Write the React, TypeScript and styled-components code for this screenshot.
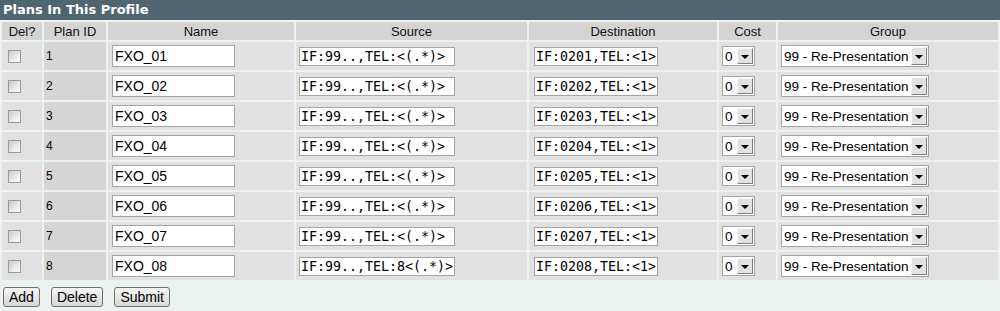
import React from "react";
import styled, { createGlobalStyle } from "styled-components";

const Global = createGlobalStyle`
  html, body { margin: 0; padding: 0; background: #ebf2f0; }
  body { font-family: "Liberation Sans", Arial, sans-serif; font-size: 13px; color: #000; }
`;

const Page = styled.div`
  width: 1000px;
`;

const TitleBar = styled.div`
  height: 20px;
  background: #4f6570;
  color: #fff;
  font-family: "DejaVu Sans", Verdana, sans-serif;
  font-weight: bold;
  font-size: 13px;
  line-height: 20px;
  padding-left: 3px;
`;

const Table = styled.table`
  width: 1000px;
  table-layout: fixed;
  border-spacing: 2px;
  border-collapse: separate;
`;

const HeadCell = styled.th`
  height: 18px;
  padding: 0;
  background: #d4d4d4;
  font-weight: normal;
  font-size: 13px;
  text-align: center;
  color: #111;
`;

const Cell = styled.td<{ $dark?: boolean }>`
  height: 28px;
  padding: 0 0 0 ${(p) => (p.$dark ? "2px" : "3px")};
  background: ${(p) => (p.$dark ? "#d5d5d5" : "#e1e1e1")};
  vertical-align: middle;
  font-size: 12px;
`;

const CheckBox = styled.span`
  display: block;
  width: 11px;
  height: 11px;
  margin-left: 3px;
  border: 1px solid #9a9a9a;
  background: linear-gradient(135deg, #c8c8c8 0%, #ececec 60%, #fafafa 100%);
`;

const TextBox = styled.span<{ $mono?: boolean; $w: number; $ml?: number }>`
  display: inline-block;
  box-sizing: border-box;
  width: ${(p) => p.$w}px;
  height: ${(p) => (p.$mono ? 19 : 22)}px;
  margin-left: ${(p) => p.$ml ?? 0}px;
  border: 1px solid #a5a5a5;
  background: #fff;
  padding-left: ${(p) => (p.$mono ? 1 : 2)}px;
  font-family: ${(p) => (p.$mono ? '"DejaVu Sans Mono", monospace' : '"Liberation Sans", Arial, sans-serif')};
  font-size: ${(p) => (p.$mono ? 13.3 : 14)}px;
  line-height: ${(p) => (p.$mono ? 17 : 20)}px;
  white-space: nowrap;
  overflow: hidden;
  vertical-align: middle;
`;

const SelectBox = styled.span<{ $w: number; $h: number }>`
  display: inline-flex;
  box-sizing: border-box;
  width: ${(p) => p.$w}px;
  height: ${(p) => p.$h}px;
  border: 1px solid #a5a5a5;
  background: #fff;
  vertical-align: middle;
  align-items: stretch;
`;

const SelectText = styled.span`
  flex: 1;
  padding-left: 2px;
  font-size: 13.5px;
  display: flex;
  align-items: center;
  white-space: nowrap;
  overflow: hidden;
`;

const SelectArrow = styled.span`
  width: 16px;
  box-sizing: border-box;
  margin: 1px;
  background: #e2e2e2;
  border-top: 1px solid #fafafa;
  border-left: 1px solid #fafafa;
  border-right: 1px solid #808080;
  border-bottom: 1px solid #808080;
  display: flex;
  align-items: center;
  justify-content: center;
  &::after {
    content: "";
    border-left: 4px solid transparent;
    border-right: 4px solid transparent;
    border-top: 4px solid #000;
    margin-top: 1px;
  }
`;

const Buttons = styled.div`
  display: flex;
  gap: 11px;
  padding: 5px 0 0 3px;
`;

const Button = styled.button`
  height: 20px;
  padding: 0 5px;
  font-family: "Liberation Sans", Arial, sans-serif;
  font-size: 14px;
  line-height: 16px;
  color: #000;
  background: linear-gradient(#f6f6f6, #d8d8d8);
  border: 1px solid #6f6f6f;
  border-radius: 3px;
`;

const rows = [1, 2, 3, 4, 5, 6, 7, 8].map((n) => ({
  id: n,
  name: `FXO_0${n}`,
  source: n === 8 ? "IF:99..,TEL:8<(.*)>" : "IF:99..,TEL:<(.*)>",
  dest: `IF:020${n},TEL:<1>`,
}));

export default function App() {
  return (
    <Page>
      <Global />
      <TitleBar>Plans In This Profile</TitleBar>
      <Table>
        <colgroup>
          <col style={{ width: 40 }} />
          <col style={{ width: 62 }} />
          <col style={{ width: 186 }} />
          <col style={{ width: 231 }} />
          <col style={{ width: 188 }} />
          <col style={{ width: 57 }} />
          <col style={{ width: 220 }} />
        </colgroup>
        <thead>
          <tr>
            <HeadCell>Del?</HeadCell>
            <HeadCell>Plan ID</HeadCell>
            <HeadCell>Name</HeadCell>
            <HeadCell>Source</HeadCell>
            <HeadCell>Destination</HeadCell>
            <HeadCell>Cost</HeadCell>
            <HeadCell>Group</HeadCell>
          </tr>
        </thead>
        <tbody>
          {rows.map((r) => (
            <tr key={r.id}>
              <Cell>
                <CheckBox />
              </Cell>
              <Cell $dark>{r.id}</Cell>
              <Cell>
                <TextBox $w={123} $ml={1}>{r.name}</TextBox>
              </Cell>
              <Cell>
                <TextBox $mono $w={156}>{r.source}</TextBox>
              </Cell>
              <Cell>
                <TextBox $mono $w={124} $ml={2}>{r.dest}</TextBox>
              </Cell>
              <Cell>
                <SelectBox $w={33} $h={20}>
                  <SelectText>0</SelectText>
                  <SelectArrow />
                </SelectBox>
              </Cell>
              <Cell>
                <SelectBox $w={148} $h={22}>
                  <SelectText>99 - Re-Presentation</SelectText>
                  <SelectArrow />
                </SelectBox>
              </Cell>
            </tr>
          ))}
        </tbody>
      </Table>
      <Buttons>
        <Button>Add</Button>
        <Button>Delete</Button>
        <Button>Submit</Button>
      </Buttons>
    </Page>
  );
}
